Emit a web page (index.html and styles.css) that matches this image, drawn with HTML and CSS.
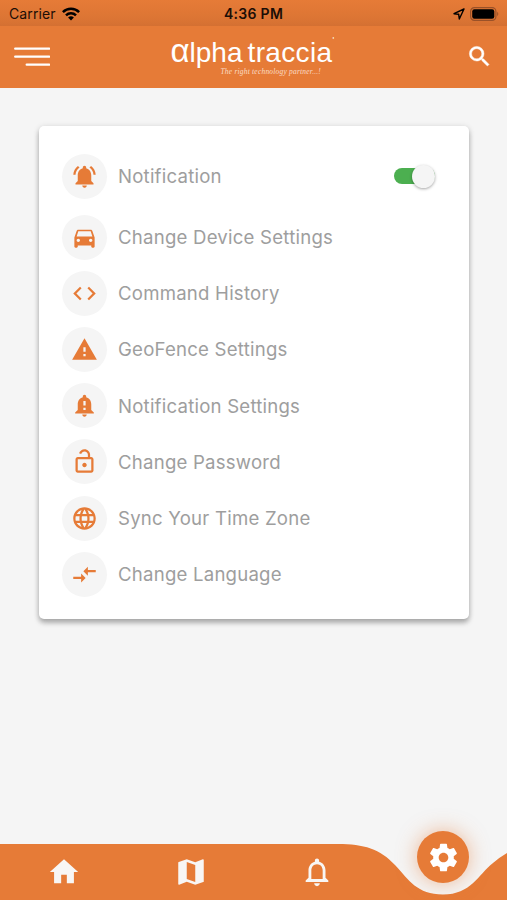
FILE: index.html
```html
<!DOCTYPE html>
<html lang="en">
<head>
    <meta charset="UTF-8">
    <title>Alpha Traccia</title>
    <link rel="stylesheet" href="styles.css">
</head>
<body>
    <header>
        <div class="status-bar">
            <div class="carrier">
                <span>Carrier</span>
                <svg width="18" height="14" viewBox="0 0 18 14" fill="none" stroke="#000" stroke-width="2.5">
                    <path d="M.9 5.2a11.5 11.5 0 0 1 16.2 0M4 8.4a7.1 7.1 0 0 1 10 0"/>
                    <path d="M9 13.5L6.1 10.6a4.1 4.1 0 0 1 5.8 0z" fill="#000" stroke="none"/>
                </svg>
            </div>
            <span class="clock">4:36 PM</span>
            <div class="indicators">
                <svg width="12" height="12" viewBox="0 0 12 12" fill="none" stroke="#000" stroke-width="1.4" stroke-linejoin="round"><path d="M11 1L1 5.7l4.7.6.6 4.7z"/></svg>
                <svg width="30" height="14" viewBox="0 0 30 14">
                    <rect x=".6" y=".6" width="25.3" height="12.8" rx="3.8" fill="none" stroke="#9a5128" stroke-width="1.2"/>
                    <rect x="2.2" y="2.2" width="22.1" height="9.6" rx="2.2"/>
                    <path d="M27.2 4.8q2.2 2.2 0 4.4z" fill="#9a5128"/>
                </svg>
            </div>
        </div>
        <div class="top-bar">
            <svg class="menu" width="36" height="20" viewBox="0 0 36 20" stroke="#fff" stroke-width="2.3" stroke-linecap="round"><path d="M1.2 1.7h34M1.2 9.7h34M12.7 17.7h22.5"/></svg>
            <div class="logo">
                <div class="logo-name"><span class="alpha">α</span><span>lpha</span><span class="second">traccia</span><sup>'</sup></div>
                <div class="tagline">The right technology partner...!</div>
            </div>
            <svg class="search" width="27" height="27" viewBox="0 0 24 24"><path d="M15.5 14h-.79l-.28-.27A6.47 6.47 0 0 0 16 9.5 6.5 6.5 0 1 0 9.5 16c1.61 0 3.09-.59 4.23-1.57l.27.28v.79l5 4.99L20.49 19l-4.99-5zm-6 0C7.01 14 5 11.99 5 9.5S7.01 5 9.5 5 14 7.01 14 9.5 11.99 14 9.5 14z"/></svg>
        </div>
    </header>

    <main>
        <ul class="card">
            <li class="first">
                <span class="icon"><svg viewBox="0 0 24 24"><path d="M7.58 4.08L6.15 2.65C3.75 4.48 2.17 7.3 2.03 10.5h2a8.445 8.445 0 0 1 3.55-6.42zm12.39 6.42h2c-.15-3.2-1.73-6.02-4.12-7.85l-1.42 1.43a8.495 8.495 0 0 1 3.54 6.42zM18 11c0-3.07-1.64-5.64-4.5-6.32V4c0-.83-.67-1.5-1.5-1.5s-1.5.67-1.5 1.5v.68C7.63 5.36 6 7.92 6 11v5l-2 2v1h16v-1l-2-2v-5zm-6 11c.14 0 .27-.01.4-.04.65-.14 1.18-.58 1.44-1.18.1-.24.15-.5.15-.78h-4c.01 1.1.9 2 2.01 2z"/></svg></span>
                <span class="label">Notification</span>
                <span class="switch"><span class="thumb"></span></span>
            </li>
            <li>
                <span class="icon"><svg viewBox="0 0 24 24"><path d="M18.92 6.01C18.72 5.42 18.16 5 17.5 5h-11c-.66 0-1.21.42-1.42 1.01L3 12v8c0 .55.45 1 1 1h1c.55 0 1-.45 1-1v-1h12v1c0 .55.45 1 1 1h1c.55 0 1-.45 1-1v-8l-2.08-5.99zM6.5 16c-.83 0-1.5-.67-1.5-1.5S5.67 13 6.5 13s1.5.67 1.5 1.5S7.33 16 6.5 16zm11 0c-.83 0-1.5-.67-1.5-1.5s.67-1.5 1.5-1.5 1.5.67 1.5 1.5-.67 1.5-1.5 1.5zM5 11l1.5-4.5h11L19 11H5z"/></svg></span>
                <span class="label">Change Device Settings</span>
            </li>
            <li>
                <span class="icon"><svg viewBox="0 0 24 24"><path d="M9.4 16.6L4.8 12l4.6-4.6L8 6l-6 6 6 6 1.4-1.4zm5.2 0l4.6-4.6-4.6-4.6L16 6l6 6-6 6-1.4-1.4z"/></svg></span>
                <span class="label">Command History</span>
            </li>
            <li>
                <span class="icon"><svg viewBox="0 0 24 24"><path d="M1 21h22L12 2 1 21zm12-3h-2v-2h2v2zm0-4h-2v-4h2v4z"/></svg></span>
                <span class="label">GeoFence Settings</span>
            </li>
            <li>
                <span class="icon"><svg viewBox="0 0 24 24"><path d="M18 16v-5c0-3.07-1.64-5.64-4.5-6.32V4c0-.83-.67-1.5-1.5-1.5s-1.5.67-1.5 1.5v.68C7.63 5.36 6 7.92 6 11v5l-2.3 2.3v.7h16.6v-.7L18 16zm-5 0h-2v-2h2v2zm0-4h-2V8h2v4zm-1 10c1.1 0 2-.9 2-2h-4c0 1.1.9 2 2 2z"/></svg></span>
                <span class="label">Notification Settings</span>
            </li>
            <li>
                <span class="icon"><svg viewBox="0 0 24 24"><path d="M18 8h-1V6c0-2.76-2.24-5-5-5-2.28 0-4.27 1.54-4.84 3.75l1.94.49C9.44 3.93 10.63 3 12 3c1.65 0 3 1.35 3 3v2H6c-1.1 0-2 .9-2 2v10c0 1.1.9 2 2 2h12c1.1 0 2-.9 2-2V10c0-1.1-.9-2-2-2zm0 12H6V10h12v10zm-6-3c1.1 0 2-.9 2-2s-.9-2-2-2-2 .9-2 2 .9 2 2 2z"/></svg></span>
                <span class="label">Change Password</span>
            </li>
            <li>
                <span class="icon"><svg viewBox="0 0 24 24"><path d="M11.99 2C6.47 2 2 6.48 2 12s4.47 10 9.99 10C17.52 22 22 17.52 22 12S17.52 2 11.99 2zm6.93 6h-2.95a15.65 15.65 0 0 0-1.38-3.56A8.03 8.03 0 0 1 18.92 8zM12 4.04c.83 1.2 1.48 2.53 1.91 3.96h-3.82c.43-1.43 1.08-2.76 1.91-3.96zM4.26 14C4.1 13.36 4 12.69 4 12s.1-1.36.26-2h3.38c-.08.66-.14 1.32-.14 2s.06 1.34.14 2H4.26zm.82 2h2.95c.32 1.25.78 2.45 1.38 3.56A7.987 7.987 0 0 1 5.08 16zm2.95-8H5.08a7.987 7.987 0 0 1 4.33-3.56A15.65 15.65 0 0 0 8.03 8zM12 19.96c-.83-1.2-1.48-2.53-1.91-3.96h3.82c-.43 1.43-1.08 2.76-1.91 3.96zM14.34 14H9.66c-.09-.66-.16-1.32-.16-2s.07-1.35.16-2h4.68c.09.65.16 1.32.16 2s-.07 1.34-.16 2zm.25 5.56c.6-1.11 1.06-2.31 1.38-3.56h2.95a8.03 8.03 0 0 1-4.33 3.56zM16.36 14c.08-.66.14-1.32.14-2s-.06-1.34-.14-2h3.38c.16.64.26 1.31.26 2s-.1 1.36-.26 2h-3.38z"/></svg></span>
                <span class="label">Sync Your Time Zone</span>
            </li>
            <li>
                <span class="icon"><svg viewBox="0 0 24 24"><path d="M9.01 14H2v2h7.01v3L13 15l-3.99-4v3zm5.98-1v-3H22V8h-7.01V5L11 9l3.99 4z"/></svg></span>
                <span class="label">Change Language</span>
            </li>
        </ul>
    </main>

    <nav>
        <!-- bar with the dip under the active button -->
        <svg class="nav-shape" width="507" height="56" viewBox="0 0 507 56"><path d="M0 0H338C364 0 380 5 395 21C409 36 417 50.5 443 50.5C471 50.5 478 31 493 19Q500 13 507 9V56H0Z"/></svg>
        <a class="tab" href="#"><svg viewBox="0 0 24 24"><path d="M10 20v-6h4v6h5v-8h3L12 3 2 12h3v8z"/></svg></a>
        <a class="tab" href="#"><svg viewBox="0 0 24 24"><path d="M20.5 3l-.16.03L15 5.1 9 3 3.36 4.9c-.21.07-.36.25-.36.48V20.5c0 .28.22.5.5.5l.16-.03L9 18.9l6 2.1 5.64-1.9c.21-.07.36-.25.36-.48V3.5c0-.28-.22-.5-.5-.5zM15 19l-6-2.11V5l6 2.11V19z"/></svg></a>
        <a class="tab" href="#"><svg viewBox="0 0 24 24"><path d="M12 22c1.1 0 2-.9 2-2h-4c0 1.1.9 2 2 2zm6-6v-5c0-3.07-1.63-5.64-4.5-6.32V4c0-.83-.67-1.5-1.5-1.5s-1.5.67-1.5 1.5v.68C7.64 5.36 6 7.92 6 11v5l-2 2v1h16v-1l-2-2zm-2 1H8v-6c0-2.48 1.51-4.5 4-4.5s4 2.02 4 4.5v6z"/></svg></a>
        <a class="tab active" href="#"><svg viewBox="0 0 24 24"><path d="M19.43 12.98c.04-.32.07-.64.07-.98s-.03-.66-.07-.98l2.11-1.65c.19-.15.24-.42.12-.64l-2-3.46c-.12-.22-.39-.3-.61-.22l-2.49 1c-.52-.4-1.08-.73-1.69-.98l-.38-2.65A.488.488 0 0 0 14 2h-4c-.25 0-.46.18-.49.42l-.38 2.65c-.61.25-1.17.59-1.69.98l-2.49-1c-.23-.09-.49 0-.61.22l-2 3.46c-.13.22-.07.49.12.64l2.11 1.65c-.04.32-.07.65-.07.98s.03.66.07.98l-2.11 1.65c-.19.15-.24.42-.12.64l2 3.46c.12.22.39.3.61.22l2.49-1c.52.4 1.08.73 1.69.98l.38 2.65c.03.24.24.42.49.42h4c.25 0 .46-.18.49-.42l.38-2.65c.61-.25 1.17-.59 1.69-.98l2.49 1c.23.09.49 0 .61-.22l2-3.46c.12-.22.07-.49-.12-.64l-2.11-1.65zM12 15.5c-1.93 0-3.5-1.57-3.5-3.5s1.57-3.5 3.5-3.5 3.5 1.57 3.5 3.5-1.57 3.5-3.5 3.5z"/></svg></a>
    </nav>
</body>
</html>
```
FILE: styles.css
```css
* {
    box-sizing: border-box;
}
body {
    margin: 0;
    height: 900px;
    display: flex;
    flex-direction: column;
    overflow: hidden;
    background-color: #f5f5f5;
    font-family: Inter, sans-serif;
}
header {
    height: 88px;
    background-color: #e67b37;
}
.status-bar {
    height: 26px;
    padding: 2px 7px 0 9px;
    display: grid;
    grid-template-columns: 1fr auto 1fr;
    align-items: center;
    background: linear-gradient(#e67b37, #dc7534 70%, #d47032);
    color: #1c0e06;
    font-size: 14px;
    line-height: 24px;
}
.carrier,
.indicators {
    display: flex;
    align-items: center;
    gap: 6px;
}
.carrier {
    letter-spacing: 0.1px;
}
.indicators {
    justify-content: flex-end;
    gap: 5px;
}
.clock {
    margin-right: 2px;
    font-weight: 600;
    font-size: 14px;
    letter-spacing: 0.3px;
}
.top-bar {
    height: 62px;
    padding: 0 14px;
    display: grid;
    grid-template-columns: 1fr auto 1fr;
    align-items: center;
}
.search {
    justify-self: end;
    margin-bottom: 2px;
    fill: #fff;
    stroke: #fff;
    stroke-width: 0.4px;
}
.logo {
    width: 166px;
    margin-bottom: 3px;
    color: #fff;
    white-space: nowrap;
}
.logo-name {
    height: 33px;
    display: flex;
    align-items: baseline;
    font-family: "Liberation Sans", Arial, sans-serif;
    font-size: 28px;
    line-height: 32px;
}
.alpha {
    font-size: 33px;
}
.second {
    margin-left: 5px;
    letter-spacing: 0.35px;
}
.logo-name sup {
    font-size: 9px;
    line-height: 10px;
    align-self: flex-start;
}
.tagline {
    margin-left: 50px;
    font-family: "Liberation Serif", serif;
    font-style: italic;
    font-size: 7.5px;
    line-height: 8px;
    letter-spacing: 0.2px;
    color: #fbdcc6;
}
main {
    flex: 1;
    padding: 38px 38px 0 39px;
}
.card {
    height: 493px;
    margin: 0;
    padding: 22.3px 23px;
    list-style: none;
    background-color: #fff;
    border-radius: 5px;
    box-shadow: 0 4px 5px rgba(0, 0, 0, 0.25), 0 1px 6px rgba(0, 0, 0, 0.14);
}
.card li {
    height: 56.2px;
    display: flex;
    align-items: center;
}
.card .first {
    margin-bottom: 4.5px;
}
.icon {
    width: 45px;
    height: 45px;
    margin-right: 11px;
    display: flex;
    align-items: center;
    justify-content: center;
    border-radius: 50%;
    background-color: #f5f5f5;
}
.icon svg {
    width: 27px;
    height: 27px;
    fill: #e67b37;
}
.label {
    flex: 1;
    font-size: 18.6px;
    letter-spacing: 0.22px;
    color: #9e9e9e;
    white-space: nowrap;
}
.switch {
    width: 41px;
    height: 16px;
    margin-right: 11px;
    display: flex;
    align-items: center;
    justify-content: flex-end;
    border-radius: 8px;
    background-color: #4caf50;
}
.thumb {
    width: 23px;
    height: 23px;
    flex: none;
    border-radius: 50%;
    background-color: #f5f5f5;
    box-shadow: 0 1px 3px rgba(0, 0, 0, 0.35);
}
nav {
    position: relative;
    height: 56px;
    padding-left: 1px;
    display: grid;
    grid-template-columns: repeat(4, 126.4px);
    align-items: center;
    justify-items: center;
}
.nav-shape {
    position: absolute;
    top: 0;
    left: 0;
    fill: #e67b37;
}
.tab {
    position: relative;
    display: flex;
}
.tab svg {
    width: 34px;
    height: 34px;
    fill: #f8f6f4;
}
.active {
    width: 52px;
    height: 52px;
    top: -15px;
    align-items: center;
    justify-content: center;
    border-radius: 50%;
    background-color: #e67b37;
    box-shadow: 0 0 20px rgba(230, 123, 55, 0.5);
}
.active svg {
    width: 33px;
    height: 33px;
    fill: #fff;
}
```
